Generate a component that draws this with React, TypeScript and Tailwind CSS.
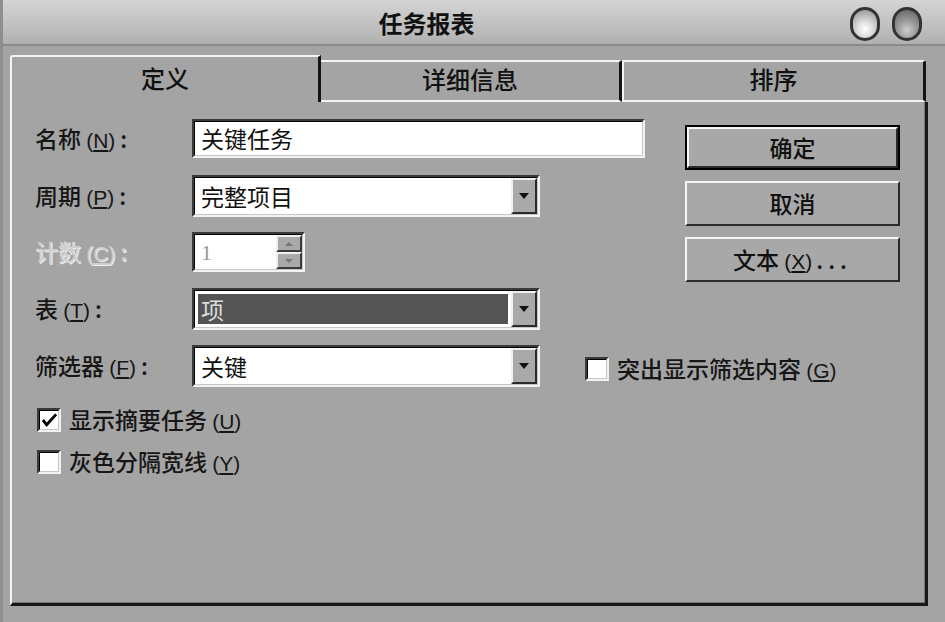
import React from "react";

const cjk = "font-['Noto_Sans_CJK_SC','Noto_Sans',sans-serif]";

const Key = ({ k }: { k: string }) => (
  <span className="font-['Liberation_Sans',sans-serif] text-[21px]">
    (<span className="underline underline-offset-2">{k}</span>)
  </span>
);

const Sunken = ({ className, children }: { className: string; children?: React.ReactNode }) => (
  <div
    className={`border-2 border-t-[#3a3a3a] border-l-[#3a3a3a] border-b-[#f2f2f2] border-r-[#f2f2f2] ${className}`}
  >
    <div className="flex h-full w-full items-center border border-t-[#050505] border-l-[#050505] border-b-[#c6c6c6] border-r-[#c6c6c6] bg-white">
      {children}
    </div>
  </div>
);

const DropBtn = () => (
  <div className="flex h-full w-[26px] shrink-0 items-center justify-center border-2 border-t-[#f0f0f0] border-l-[#f0f0f0] border-b-[#2a2a2a] border-r-[#2a2a2a] bg-[#a9a9a9]">
    <svg width="10" height="6" viewBox="0 0 10 6">
      <path d="M0 0h10L5 6z" fill="#111" />
    </svg>
  </div>
);

const Label = ({ text, k, disabled }: { text: string; k: string; disabled?: boolean }) => (
  <div
    className={`w-[157px] shrink-0 text-[23px] font-medium ${
      disabled ? "text-[#cfcfcf] [text-shadow:1px_1px_0_#f0f0f0]" : "text-[#161616]"
    }`}
  >
    {text} <Key k={k} />
    <span className="ml-[5px]">:</span>
  </div>
);

const Check = ({ checked, children }: { checked?: boolean; children: React.ReactNode }) => (
  <div className="flex h-[24px] items-center gap-[8px] text-[23px] font-medium text-[#161616]">
    <Sunken className="h-[24px] w-[24px] shrink-0">
      {checked && (
        <svg width="18" height="16" viewBox="0 0 18 16" className="ml-[1px]">
          <path d="M2 8l4 5 10-11" stroke="#000" strokeWidth="3" fill="none" />
        </svg>
      )}
    </Sunken>
    <span className="whitespace-nowrap">{children}</span>
  </div>
);

const Btn = ({ children, def }: { children: React.ReactNode; def?: boolean }) => (
  <div className={`h-[45px] ${def ? "border-2 border-black" : ""}`}>
    <div className="flex h-full w-full items-center justify-center border-2 border-t-[#f6f6f6] border-l-[#f6f6f6] border-b-[#2a2a2a] border-r-[#2a2a2a] bg-[#a8a8a8] text-[23px] font-medium text-[#111]">
      <span className="whitespace-nowrap">{children}</span>
    </div>
  </div>
);

export default function App() {
  return (
    <div className={`relative h-[622px] w-[945px] overflow-hidden border-l-[3px] border-[#8e8e8e] bg-[#a4a4a4] ${cjk}`}>
      {/* title bar */}
      <div className="flex h-[46px] items-center border-b-2 border-[#8a8a8a] bg-[linear-gradient(180deg,#d4d4d4_0%,#c6c6c6_40%,#bcbcbc_70%,#b0b0b0_100%)]">
        <div className="flex-1 pt-[2px] text-center text-[24px] font-bold text-[#111]">任务报表</div>
        <div className="flex w-[95px] gap-[12px] pr-[10px] pt-[4px]">
          <div className="h-[34px] w-[30px] rounded-full border-[3px] border-[#333] bg-[radial-gradient(circle_at_50%_68%,#ffffff_0%,#e2e2e2_30%,#8a8a8a_100%)]" />
          <div className="h-[34px] w-[30px] rounded-full border-[3px] border-[#333] bg-[radial-gradient(circle_at_50%_72%,#d0d0d0_0%,#9a9a9a_40%,#5e5e5e_100%)]" />
        </div>
      </div>

      {/* tabs */}
      <div className="ml-[7px] mt-[9px] flex h-[47px] items-end text-[24px] font-medium text-[#111]">
        <div className="flex h-[47px] w-[311px] items-start justify-center rounded-tl-[3px] border-l-2 border-t-2 border-r-[3px] border-l-[#f4f4f4] border-t-[#f4f4f4] border-r-[#141414] bg-[#a4a4a4] pt-[3px]">
          定义
        </div>
        <div className="flex h-[42px] w-[301px] items-center justify-center border-t-2 border-r-[3px] border-b-2 border-t-[#f4f4f4] border-r-[#141414] border-b-[#f4f4f4] pb-[4px]">
          详细信息
        </div>
        <div className="flex h-[42px] w-[304px] items-center justify-center rounded-tr-[3px] border-l-2 border-t-2 border-r-[3px] border-b-2 border-l-[#f4f4f4] border-t-[#f4f4f4] border-r-[#141414] border-b-[#f4f4f4] pb-[4px]">
          排序
        </div>
      </div>

      {/* panel */}
      <div className="ml-[7px] h-[504px] w-[918px] border-l-2 border-r-[3px] border-b-[3px] border-l-[#f4f4f4] border-r-[#181818] border-b-[#181818]">
        <div className="h-full w-full border-r border-b border-[#767676] pl-[23px] pt-[17px]">
          <div className="flex">
            <div className="w-[650px]">
              <div className="flex items-center">
                <Label text="名称" k="N" />
                <Sunken className="h-[39px] w-[453px]">
                  <span className="pl-[6px] text-[23px] text-[#111]">关键任务</span>
                </Sunken>
              </div>
              <div className="mt-[17px] flex items-center">
                <Label text="周期" k="P" />
                <Sunken className="h-[42px] w-[348px]">
                  <span className="flex-1 pl-[6px] text-[23px] text-[#111]">完整项目</span>
                  <DropBtn />
                </Sunken>
              </div>
              <div className="mt-[15px] flex items-center">
                <Label text="计数" k="C" disabled />
                <Sunken className="h-[40px] w-[113px]">
                  <span className="flex-1 pl-[6px] font-['Liberation_Serif',serif] text-[22px] text-[#9a9a9a]">1</span>
                  <div className="flex h-full w-[26px] flex-col">
                    <div className="flex flex-1 items-center justify-center border-2 border-t-[#f0f0f0] border-l-[#f0f0f0] border-b-[#3a3a3a] border-r-[#3a3a3a] bg-[#a9a9a9]">
                      <svg width="8" height="4" viewBox="0 0 8 4">
                        <path d="M0 4h8L4 0z" fill="#777" />
                      </svg>
                    </div>
                    <div className="flex flex-1 items-center justify-center border-2 border-t-[#f0f0f0] border-l-[#f0f0f0] border-b-[#3a3a3a] border-r-[#3a3a3a] bg-[#a9a9a9]">
                      <svg width="8" height="4" viewBox="0 0 8 4">
                        <path d="M0 0h8L4 4z" fill="#777" />
                      </svg>
                    </div>
                  </div>
                </Sunken>
              </div>
              <div className="mt-[16px] flex items-center">
                <Label text="表" k="T" />
                <Sunken className="h-[42px] w-[348px]">
                  <div className="flex h-full flex-1 p-[3px]">
                    <div className="flex flex-1 items-center bg-[#545454] pl-[3px] text-[23px] text-[#dcdcdc]">项</div>
                  </div>
                  <DropBtn />
                </Sunken>
              </div>
            </div>
            <div className="mt-[6px] flex w-[215px] flex-col gap-[11px]">
              <Btn def>确定</Btn>
              <Btn>取消</Btn>
              <Btn>
                文本 <Key k="X" />
                <span className="ml-[4px] tracking-[5px]">...</span>
              </Btn>
            </div>
          </div>

          <div className="mt-[15px] flex items-center">
            <Label text="筛选器" k="F" />
            <Sunken className="h-[42px] w-[348px]">
              <span className="flex-1 pl-[6px] text-[23px] text-[#111]">关键</span>
              <DropBtn />
            </Sunken>
            <div className="ml-[45px] mt-[6px]">
              <Check>
                突出显示筛选内容 <Key k="G" />
              </Check>
            </div>
          </div>

          <div className="ml-[2px] mt-[21px] flex flex-col gap-[18px]">
            <Check checked>
              显示摘要任务 <Key k="U" />
            </Check>
            <Check>
              灰色分隔宽线 <Key k="Y" />
            </Check>
          </div>
        </div>
      </div>
    </div>
  );
}
